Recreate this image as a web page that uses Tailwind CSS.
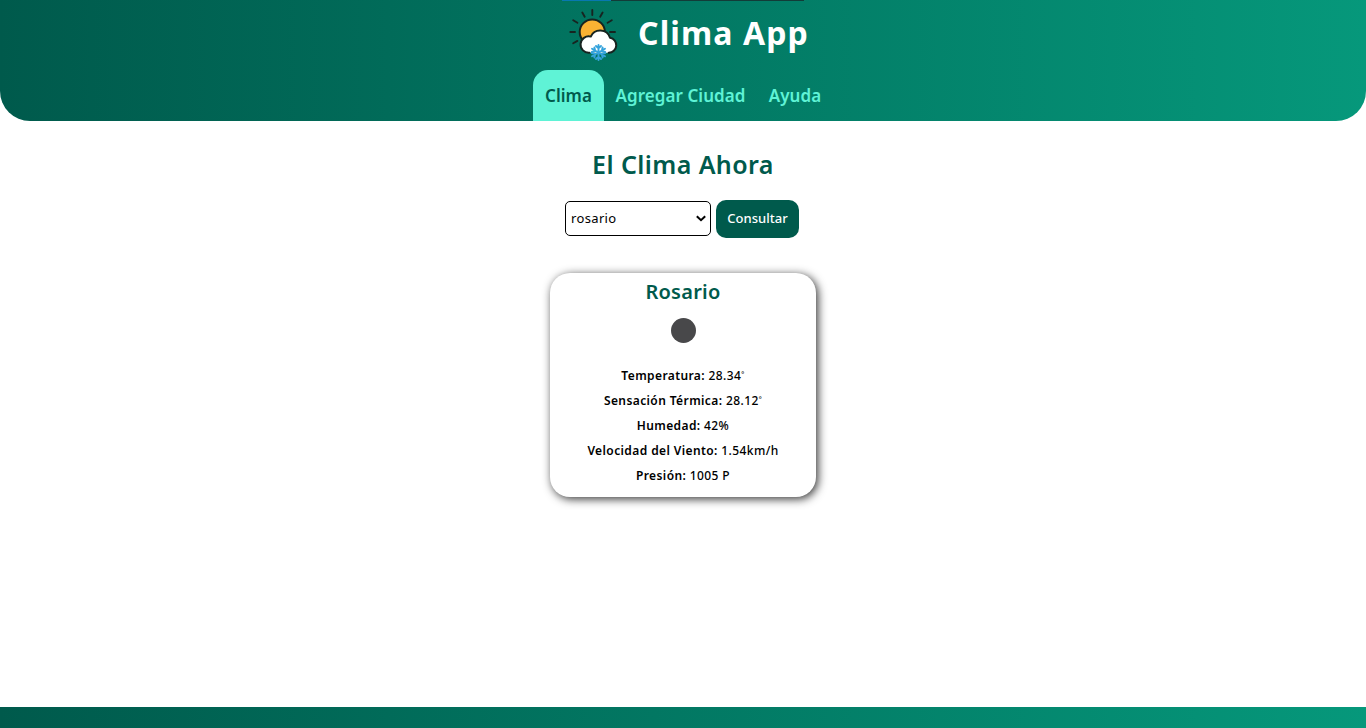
<!DOCTYPE html>
<html lang="es">
<head>
<meta charset="utf-8">
<title>Clima App</title>
<script src="https://cdn.jsdelivr.net/npm/@tailwindcss/browser@4"></script>
</head>
<body class="flex h-[728px] flex-col overflow-hidden bg-white font-['Noto_Sans',sans-serif] text-black">
<header class="relative flex h-[121px] shrink-0 flex-col items-center rounded-b-[30px] bg-linear-to-r from-[#005a4c] to-[#06987b]">
  <div class="absolute top-0 left-[562px] flex h-px w-[242px]"><span class="w-[49px] bg-[#0878b0]"></span><span class="flex-1 bg-[#123c38]"></span></div>
  <div class="flex h-[70px] w-[240px] items-start">
    <svg class="-ml-[3px] h-[66px] w-[66px] shrink-0" viewBox="0 0 66 66" fill="none" stroke-linecap="round" stroke-linejoin="round">
      <path d="M32.300 10v5M22.300 12.500l2.400 4.200M42.600 12.500l-2.400 4.200M13.200 20.300l4.200 2.400M51.800 20.300l-4.200 2.400M10.300 32h4.700M50 32h5M13.200 43.300l4.200-2.400" stroke="#172420" stroke-width="1.900"/>
      <circle cx="32.300" cy="32" r="12.600" fill="#f9b233" stroke="#172420" stroke-width="2"/>
      <path d="M29 52.700a8.200 8.200 0 1 1 1.800-16.100A10.300 10.300 0 0 1 50 37.800a7.500 7.500 0 0 1-.8 14.900Z" fill="#fff"/>
      <path d="M29.500 52.700a8.200 8.200 0 1 1 1.300-16.100A10.300 10.300 0 0 1 50 37.800a7.500 7.500 0 0 1-1.300 14.900" stroke="#172420" stroke-width="2"/>
      <path d="M38.500 45v15M32 48.750l13 7.500M45 48.750l-13 7.500M36 46l2.500 2.300 2.500-2.300M36 59l2.500-2.300 2.500 2.300M31.800 52l3.400-1-.8-3.500M45.200 52l-3.400-1 .8-3.500M31.800 53l3.400 1-.8 3.500M45.200 53l-3.400 1 .8 3.500" stroke="#35a3dc" stroke-width="1.900"/>
    </svg>
    <h1 class="mt-[12px] ml-[12px] text-[32px] leading-[41px] font-bold tracking-[1.1px] whitespace-nowrap text-white">Clima App</h1>
  </div>
  <nav class="flex h-[51px] w-[300px] text-[17px] leading-[51px] font-semibold tracking-[0.05px] whitespace-nowrap text-[#5ff3d6]">
    <a class="w-[71px] shrink-0 rounded-t-[15px] bg-[#5ff3d6] text-center text-[#005a4c]">Clima</a>
    <a class="w-[153px] shrink-0 text-center">Agregar Ciudad</a>
    <a class="w-[76px] shrink-0 text-center">Ayuda</a>
  </nav>
</header>
<main class="flex flex-1 flex-col items-center">
  <h2 class="mt-[25px] h-9 text-[25px] leading-9 font-semibold tracking-[0.42px] text-[#005a4c]">El Clima Ahora</h2>
  <div class="mt-[18px] mr-[2px] flex h-[38px] items-start gap-[5px] text-[13px]">
    <div class="mt-px flex h-[35px] w-[146px] items-center justify-between rounded-[5px] border border-black pr-[4px] pl-[5px] tracking-[0.35px]"><span>rosario</span>
      <svg class="h-[7px] w-[10px]" viewBox="0 0 10 7" fill="none" stroke="#000" stroke-width="2"><path d="M.8 1.200 5 5.200l4.200-4"/></svg></div>
    <button class="h-[38px] w-[83px] rounded-[10px] bg-[#005a4c] font-medium tracking-[0.05px] text-white">Consultar</button>
  </div>
  <section class="mt-[35px] flex h-[224px] w-[266px] flex-col items-center rounded-[20px] bg-white shadow-[2px_2px_10px_rgba(0,0,0,0.8)]">
    <h3 class="mt-[4px] h-[30px] text-[20px] leading-[30px] font-semibold tracking-[0.25px] text-[#005a4c]">Rosario</h3>
    <div class="mt-[11px] h-[25px] w-[25px] rounded-full bg-[#48484a]"></div>
    <div class="mt-[20px] text-center text-[12px] leading-[25px] font-semibold tracking-[0.4px] whitespace-nowrap">
      <p>Temperatura: <span class="font-medium">28.34<span class="relative -top-[3px] text-[7px] leading-none">°</span></span></p>
      <p>Sensación Térmica: <span class="font-medium">28.12<span class="relative -top-[3px] text-[7px] leading-none">°</span></span></p>
      <p>Humedad: <span class="font-medium">42%</span></p>
      <p>Velocidad del Viento: <span class="font-medium">1.54km/h</span></p>
      <p>Presión: <span class="font-medium">1005 P</span></p>
    </div>
  </section>
</main>
<footer class="h-[21px] shrink-0 bg-linear-to-r from-[#005a4c] to-[#06987b]"></footer>
</body>
</html>
